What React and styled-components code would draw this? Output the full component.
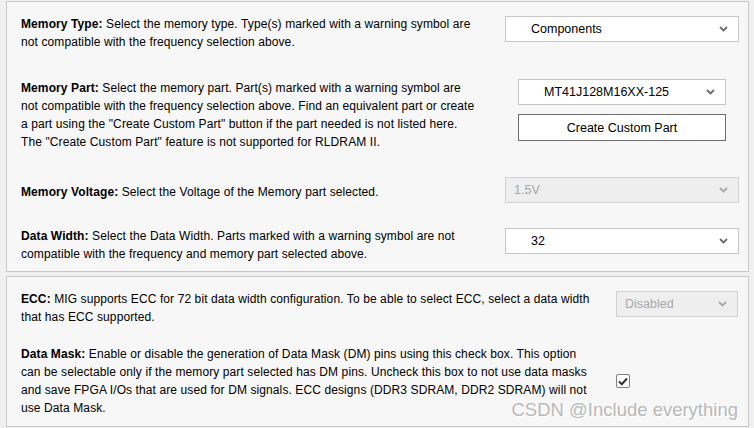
import React from "react";
import styled, { createGlobalStyle } from "styled-components";

const GlobalStyle = createGlobalStyle`
  html, body {
    margin: 0;
    padding: 0;
    background-color: #f0f0f0;
  }
  * {
    box-sizing: border-box;
  }
`;

const Page = styled.div`
  position: relative;
  width: 754px;
  height: 428px;
  padding: 1px 5px 0 6px;
  display: flex;
  flex-direction: column;
  gap: 4px;
  font-family: "Liberation Sans", Arial, sans-serif;
  color: #000;
  overflow: hidden;
`;

const Panel = styled.div`
  border: 1px solid #c9c9c9;
  background-color: #f7f7f7;
  padding: ${(p) => p.$padding};
  display: flex;
  flex-direction: column;
`;

const Row = styled.div`
  display: flex;
  align-items: ${(p) => p.$align || "flex-start"};
  margin-top: ${(p) => p.$top || 0}px;
`;

const Description = styled.div`
  font-size: 12px;
  line-height: 18px;
  letter-spacing: 0.1px;
  white-space: nowrap;
  padding-top: ${(p) => p.$shift || 0}px;

  b {
    font-weight: bold;
  }
`;

const ControlArea = styled.div`
  width: ${(p) => p.$width}px;
  margin-left: auto;
  margin-top: ${(p) => p.$top || 0}px;
  display: flex;
  flex-direction: column;
  align-items: ${(p) => (p.$center ? "center" : "flex-start")};
  gap: 9px;
`;

const Select = styled.div`
  width: ${(p) => (p.$width ? `${p.$width}px` : "100%")};
  height: 26px;
  border: 1px solid ${(p) => (p.$disabled ? "#d2d2d2" : "#c6c6c6")};
  background-color: ${(p) => (p.$disabled ? "#eeeeee" : "#ffffff")};
  color: ${(p) => (p.$disabled ? "#a8a8a8" : "#000")};
  padding: 0 10px 0 ${(p) => p.$indent}px;
  font-size: 12.5px;
  display: flex;
  align-items: center;
  justify-content: space-between;
`;

const Chevron = styled.svg`
  width: 9px;
  height: 6px;
  flex-shrink: 0;
`;

const Button = styled.button`
  width: 208px;
  height: 27px;
  border: 1px solid #6e6e6e;
  background-color: #fff;
  font-family: "Liberation Sans", Arial, sans-serif;
  font-size: 12.5px;
  color: #000;
  padding: 0;
  margin: 0;
`;

const CheckBox = styled.div`
  width: 14px;
  height: 14px;
  border: 1px solid #808080;
  border-radius: 2px;
  background-color: #fff;
  display: flex;
  align-items: center;
  justify-content: center;
`;

const Watermark = styled.div`
  position: absolute;
  right: 16px;
  bottom: 7px;
  font-family: "Liberation Sans", Arial, sans-serif;
  font-size: 18.5px;
  color: #b9b9b9;
  text-shadow: 1px 1px 0 #ffffff;
  white-space: nowrap;
`;

function Dropdown({ value, disabled, indent = 25, width }) {
  return (
    <Select $disabled={disabled} $indent={indent} $width={width}>
      <span>{value}</span>
      <Chevron viewBox="0 0 9 6">
        <path
          d="M1 1 L4.5 4.5 L8 1"
          fill="none"
          stroke={disabled ? "#a8a8a8" : "#6b6b6b"}
          strokeWidth="1.8"
        />
      </Chevron>
    </Select>
  );
}

export default function App() {
  return (
    <Page>
      <GlobalStyle />
      <Panel $padding="13px 9px 7px 14px" style={{ height: "271px" }}>
        <Row>
          <Description>
            <b>Memory Type:</b> Select the memory type. Type(s) marked with a warning symbol are
            <br />
            not compatible with the frequency selection above.
          </Description>
          <ControlArea $width={234} $top={1}>
            <Dropdown value="Components" />
          </ControlArea>
        </Row>

        <Row $top={28}>
          <Description>
            <b>Memory Part:</b> Select the memory part. Part(s) marked with a warning symbol are
            <br />
            not compatible with the frequency selection above. Find an equivalent part or create
            <br />
            a part using the "Create Custom Part" button if the part needed is not listed here.
            <br />
            The "Create Custom Part" feature is not supported for RLDRAM II.
          </Description>
          <ControlArea $width={234} $center>
            <Dropdown value="MT41J128M16XX-125" width={208} />
            <Button>Create Custom Part</Button>
          </ControlArea>
        </Row>

        <Row $top={26}>
          <Description $shift={6}>
            <b>Memory Voltage:</b> Select the Voltage of the Memory part selected.
          </Description>
          <ControlArea $width={234}>
            <Dropdown value="1.5V" disabled indent={8} />
          </ControlArea>
        </Row>

        <Row $top={24}>
          <Description>
            <b>Data Width:</b> Select the Data Width. Parts marked with a warning symbol are not
            <br />
            compatible with the frequency and memory part selected above.
          </Description>
          <ControlArea $width={234} $top={1}>
            <Dropdown value="32" />
          </ControlArea>
        </Row>
      </Panel>

      <Panel $padding="13px 10px 9px 14px" style={{ height: "151px" }}>
        <Row>
          <Description>
            <b>ECC:</b> MIG supports ECC for 72 bit data width configuration. To be able to select ECC, select a data width
            <br />
            that has ECC supported.
          </Description>
          <ControlArea $width={122} $top={1}>
            <Dropdown value="Disabled" disabled indent={8} />
          </ControlArea>
        </Row>

        <Row $top={19} $align="center">
          <Description>
            <b>Data Mask:</b> Enable or disable the generation of Data Mask (DM) pins using this check box. This option
            <br />
            can be selectable only if the memory part selected has DM pins. Uncheck this box to not use data masks
            <br />
            and save FPGA I/Os that are used for DM signals. ECC designs (DDR3 SDRAM, DDR2 SDRAM) will not
            <br />
            use Data Mask.
          </Description>
          <ControlArea $width={122}>
            <CheckBox>
              <svg width="10" height="9" viewBox="0 0 10 9">
                <path
                  d="M1 4.5 L3.8 7.2 L9 1.5"
                  fill="none"
                  stroke="#333"
                  strokeWidth="2"
                />
              </svg>
            </CheckBox>
          </ControlArea>
        </Row>
      </Panel>

      <Watermark>CSDN @Include everything</Watermark>
    </Page>
  );
}
